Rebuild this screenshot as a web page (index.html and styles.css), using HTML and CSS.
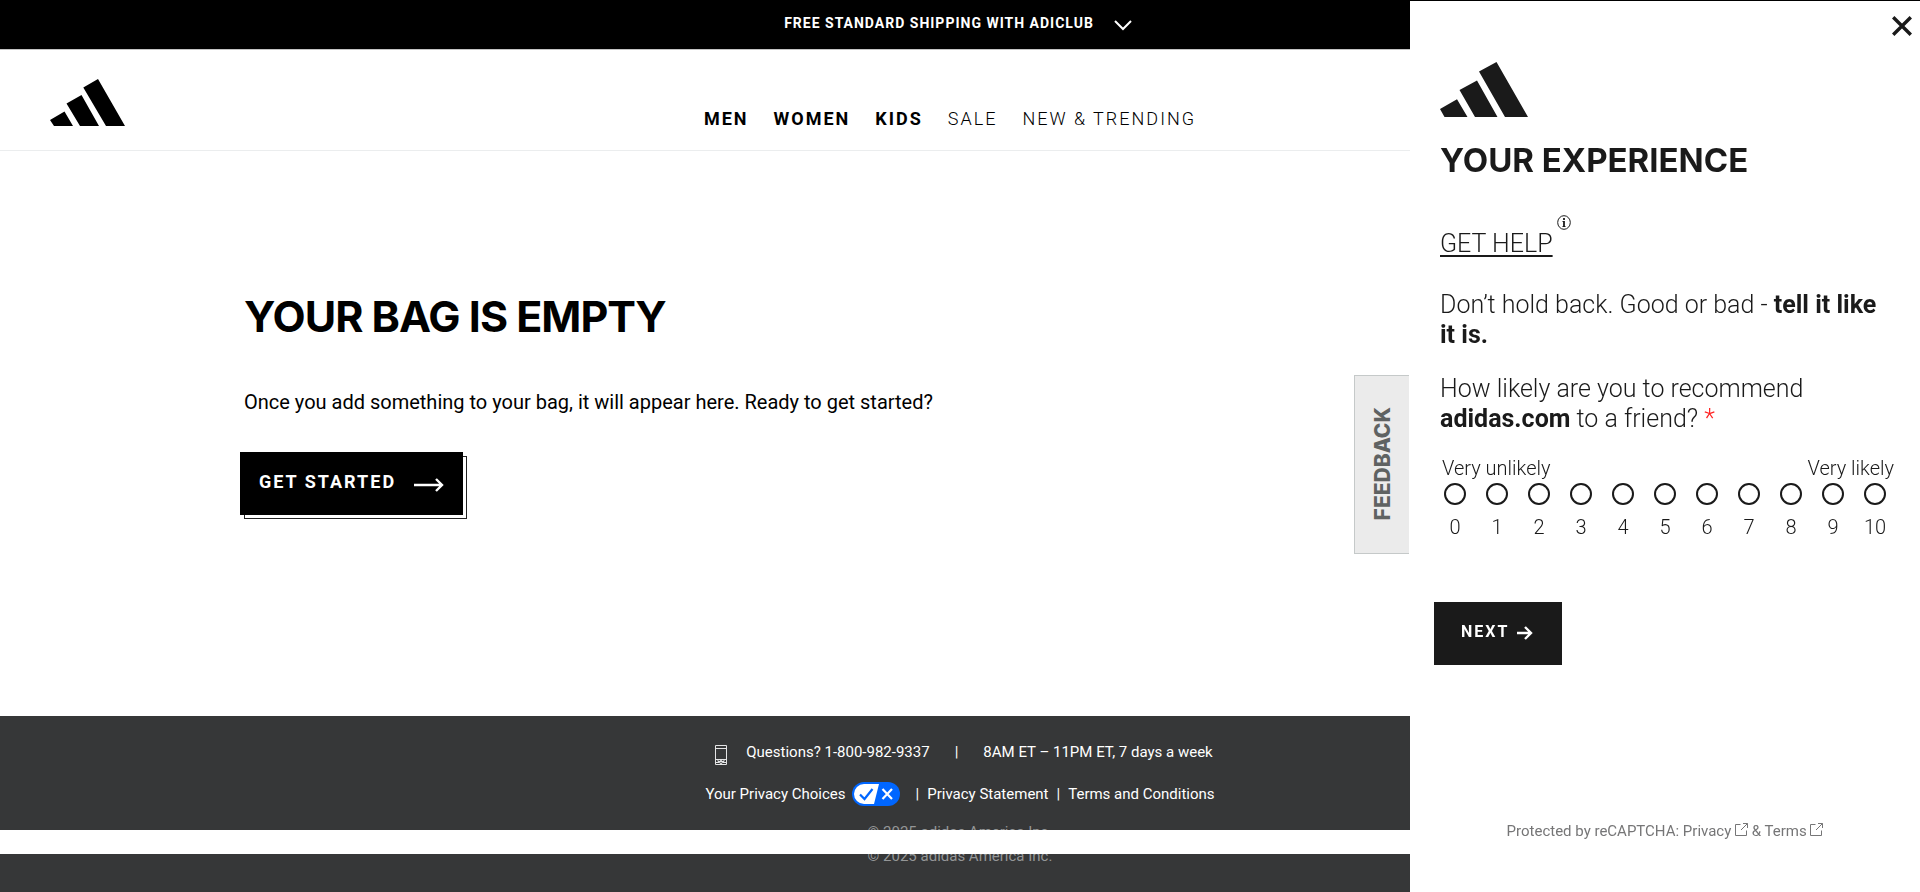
FILE: index.html
```html
<!DOCTYPE html>
<html lang="en">
<head>
<meta charset="utf-8">
<title>Your bag</title>
<link rel="stylesheet" href="styles.css">
</head>
<body>
<div class="page">
  <button class="promo" type="button">
    <span>FREE STANDARD SHIPPING WITH ADICLUB</span>
    <svg class="promo-icon" width="18" height="11" viewBox="0 0 18 11" fill="none" stroke="currentColor" stroke-width="2"><path d="M1 1l8 8 8-8"/></svg>
  </button>
  <header class="header">
    <a class="logo" href="#" aria-label="Home">
      <svg width="75" height="47" viewBox="0 0 75 47" fill="currentColor"><path d="M0 41L14.500 32.500 23 47H4zM16.500 24.500L31.500 16 49 47H30zM33.300 8.500L48 0 75 47H56z"/></svg>
    </a>
    <nav class="nav">
      <a class="strong" href="#">MEN</a>
      <a class="strong" href="#">WOMEN</a>
      <a class="strong" href="#">KIDS</a>
      <a href="#">SALE</a>
      <a href="#">NEW &amp; TRENDING</a>
    </nav>
  </header>
  <main class="main">
    <h1>YOUR BAG IS EMPTY</h1>
    <p>Once you add something to your bag, it will appear here. Ready to get started?</p>
    <a class="cta" href="#">
      <span>GET STARTED</span>
      <svg width="30" height="14" viewBox="0 0 30 14" fill="none" stroke="currentColor" stroke-width="2.400"><path d="M0 7h28M22 1l6 6-6 6"/></svg>
    </a>
  </main>
  <footer class="footer">
    <div class="footer-row contact">
      <svg width="12" height="20" viewBox="0 0 12 20" fill="none" stroke="#e4e4e5"><path d="M.5.5h11v19H.5zM.5 3.500h11M.5 14.500h11"/><path d="M3 14.500v2h6v-2M.5 17.500H4M8 17.500h3.500"/><circle cx="6" cy="17" r="1.500"/></svg>
      <span>Questions? 1-800-982-9337</span>
      <span class="pipe">|</span>
      <span>8AM ET – 11PM ET, 7 days a week</span>
    </div>
    <div class="footer-row legal">
      <a class="choices" href="#">Your Privacy Choices
        <svg width="48" height="24" viewBox="0 0 48 24"><rect width="48" height="24" rx="12" fill="#06f"/><path d="M12 2h15l-5 20H12a10 10 0 010-20z" fill="#fff"/><path d="M8 12.500l4.500 4.500 8-10" fill="none" stroke="#06f" stroke-width="2.200"/><path d="M30.500 7l9.500 10M40 7l-9.500 10" fill="none" stroke="#fff" stroke-width="2.200"/></svg>
      </a>
      <span>|</span>
      <a href="#">Privacy Statement</a>
      <span>|</span>
      <a href="#">Terms and Conditions</a>
    </div>
    <div class="copy">© 2025 adidas America Inc.</div>
  </footer>
  <div class="footer-end"><div class="copy">© 2025 adidas America Inc.</div></div>
</div>

<button class="feedback" type="button">FEEDBACK</button>

<aside class="drawer">
  <button class="close" type="button" aria-label="Close">
    <svg width="20" height="20" viewBox="0 0 20 20" stroke="currentColor" stroke-width="3.400" fill="none"><path d="M1.200 1.200l17.600 17.600M18.800 1.200L1.200 18.800"/></svg>
  </button>
  <form class="survey">
    <svg class="survey-logo" width="88" height="55" viewBox="0 0 88 55" fill="currentColor"><path d="M0 47L17 37.300 27.500 55H4.500zM19.500 28L37 18.500 57.500 55H35zM39 9.500L56.500 0 88 55H65z"/></svg>
    <h2>YOUR EXPERIENCE</h2>
    <div class="help">
      <a href="#">GET HELP</a>
      <svg width="14" height="15" viewBox="0 0 14 15" fill="none" stroke="currentColor"><ellipse cx="7" cy="7.500" rx="6.300" ry="6.800"/><path d="M5.500 6.500H7M5.500 11.500h3"/><path d="M7 3v2M7 6v6" stroke-width="1.800"/></svg>
    </div>
    <p>Don’t hold back. Good or bad - <b>tell it like it is.</b></p>
    <fieldset>
      <legend>How likely are you to recommend <b>adidas.com</b> to a friend? <span class="req">*</span></legend>
      <div class="ends"><span>Very unlikely</span><span>Very likely</span></div>
      <div class="scale">
        <label><input type="radio" name="nps">0</label>
        <label><input type="radio" name="nps">1</label>
        <label><input type="radio" name="nps">2</label>
        <label><input type="radio" name="nps">3</label>
        <label><input type="radio" name="nps">4</label>
        <label><input type="radio" name="nps">5</label>
        <label><input type="radio" name="nps">6</label>
        <label><input type="radio" name="nps">7</label>
        <label><input type="radio" name="nps">8</label>
        <label><input type="radio" name="nps">9</label>
        <label><input type="radio" name="nps">10</label>
      </div>
    </fieldset>
    <button class="next" type="button">
      <span>NEXT</span>
      <svg width="16" height="14" viewBox="0 0 16 14" fill="none" stroke="currentColor" stroke-width="2.400"><path d="M0 7h14M8 1l6 6-6 6"/></svg>
    </button>
  </form>
  <div class="captcha">Protected by reCAPTCHA:
    <a href="#">Privacy <svg width="13" height="13" viewBox="0 0 13 13" fill="none" stroke="currentColor"><path d="M5.500 1.500h-5v11h11v-5M8 .5h4.500V5M12.500.5L6 7"/></svg></a>
    &amp; <a href="#">Terms <svg width="13" height="13" viewBox="0 0 13 13" fill="none" stroke="currentColor"><path d="M5.500 1.500h-5v11h11v-5M8 .5h4.500V5M12.500.5L6 7"/></svg></a>
  </div>
</aside>
</body>
</html>
```
FILE: styles.css
```css
* { box-sizing: border-box; }
body { margin: 0; background: #fff; color: #000; font-family: Roboto, "Liberation Sans", sans-serif; font-size: 15px; }
a { color: inherit; text-decoration: none; }
button { border: 0; margin: 0; font-family: inherit; cursor: pointer; }
svg { display: block; flex: none; }
h1, h2, p { margin: 0; }

.page { min-height: 100vh; display: flex; flex-direction: column; overflow: hidden; }

.promo { display: flex; align-items: center; justify-content: center; gap: 20px; height: 50px; padding: 0 4px 4px 0; background: #000; color: #fff; border-bottom: 1px solid #c4c4c4; font-size: 14px; font-weight: 700; letter-spacing: 1px; }
.promo-icon { margin-top: 6px; }

.header { display: flex; align-items: flex-end; height: 101px; padding: 0 50px 24px; border-bottom: 1px solid #ebedee; }
.nav { flex: 1; display: flex; justify-content: center; gap: 25px; margin-bottom: -3px; padding-right: 95px; font-size: 18px; line-height: 20px; letter-spacing: 2px; font-weight: 300; }
.nav .strong { font-weight: 700; }

.main { flex: 1; padding: 137px 244px 0; }
h1 { font-family: Inter, sans-serif; font-size: 43px; line-height: 56px; font-weight: 700; letter-spacing: -1px; }
.main p { margin-top: 44px; font-size: 20px; line-height: 28px; }
.cta { position: relative; display: inline-flex; align-items: center; gap: 18px; height: 63px; margin: 36px 0 0 -4px; padding: 0 19px; background: #000; color: #fff; font-size: 18px; font-weight: 700; letter-spacing: 2px; }
.cta span { padding-bottom: 4px; }
.cta svg { margin-top: 3px; }
.cta::after { content: ""; position: absolute; z-index: -1; inset: 4px -4px -4px 4px; border: 1px solid #222; }

.footer { height: 114px; padding-top: 24px; overflow: hidden; background: #363738; color: #fff; }
.footer-row { display: flex; justify-content: center; line-height: 24px; }
.contact { gap: 19px; padding-left: 8px; }
.contact svg { margin-top: 5px; }
.contact .pipe { padding: 0 6px; }
.legal { align-items: center; gap: 8px; margin-top: 17px; }
.choices { display: flex; gap: 6px; padding-right: 8px; }
.copy { color: #949697; line-height: 24px; text-align: center; }
.footer .copy { margin-top: 14px; }
.footer-end { display: flex; flex-direction: column; justify-content: flex-end; height: 38px; margin-top: 24px; padding-bottom: 24px; background: #363738; overflow: hidden; }
.footer-end .copy { display: flex; align-items: flex-end; justify-content: center; height: 14px; overflow: hidden; }

.feedback { position: fixed; right: 511px; top: 42vh; width: 55px; height: 179px; padding: 0; border: 1px solid #c5c9c9; border-right: 0; background: #ebebeb; color: #5f6262; font-family: Inter, sans-serif; font-size: 21px; font-weight: 800; writing-mode: sideways-lr; }

.drawer { position: fixed; top: 1px; right: 0; bottom: 0; width: 510px; display: flex; flex-direction: column; background: #fff; color: #1a1a1a; box-shadow: 0 -1px #000; }
.close { position: absolute; top: 15px; right: 8px; padding: 0; background: none; color: #1a1a1a; }
.survey { padding: 61px 26px 0 30px; font-size: 25px; line-height: 30px; font-weight: 300; }
.survey b { font-weight: 700; }
h2 { margin-top: 24px; font-family: Inter, sans-serif; font-size: 33px; line-height: 38px; font-weight: 700; }
.help { display: flex; gap: 4px; margin-top: 36px; }
.help a { margin-top: 14px; line-height: 30px; text-decoration: underline; text-decoration-thickness: 2px; text-underline-offset: 3px; }
.survey p { margin-top: 31px; }
fieldset { margin: 24px 0 0; padding: 0; border: 0; min-width: 0; }
legend { padding: 0; }
.req { color: #f22; }
.ends { display: flex; justify-content: space-between; margin-top: 22px; padding-left: 2px; font-size: 20px; line-height: 24px; }
.scale { display: flex; justify-content: space-between; margin: 3px 6px 0 2px; font-size: 20px; line-height: 24px; }
.scale label { width: 26px; display: flex; flex-direction: column; align-items: center; gap: 10px; }
.scale input { appearance: none; width: 22px; height: 22px; margin: 0; border: 2px solid #1a1a1a; border-radius: 50%; background: #fff; }
.next { display: flex; align-items: center; gap: 8px; height: 63px; margin: 63px 0 0 -6px; padding: 0 29px 4px 27px; background: #1a1a1a; color: #fff; font-size: 16px; font-weight: 700; letter-spacing: 2px; }
.next svg { margin-top: 3px; }
.captcha { margin-top: auto; padding-bottom: 50px; color: #767677; line-height: 22px; text-align: center; }
.captcha svg { display: inline; }
```
